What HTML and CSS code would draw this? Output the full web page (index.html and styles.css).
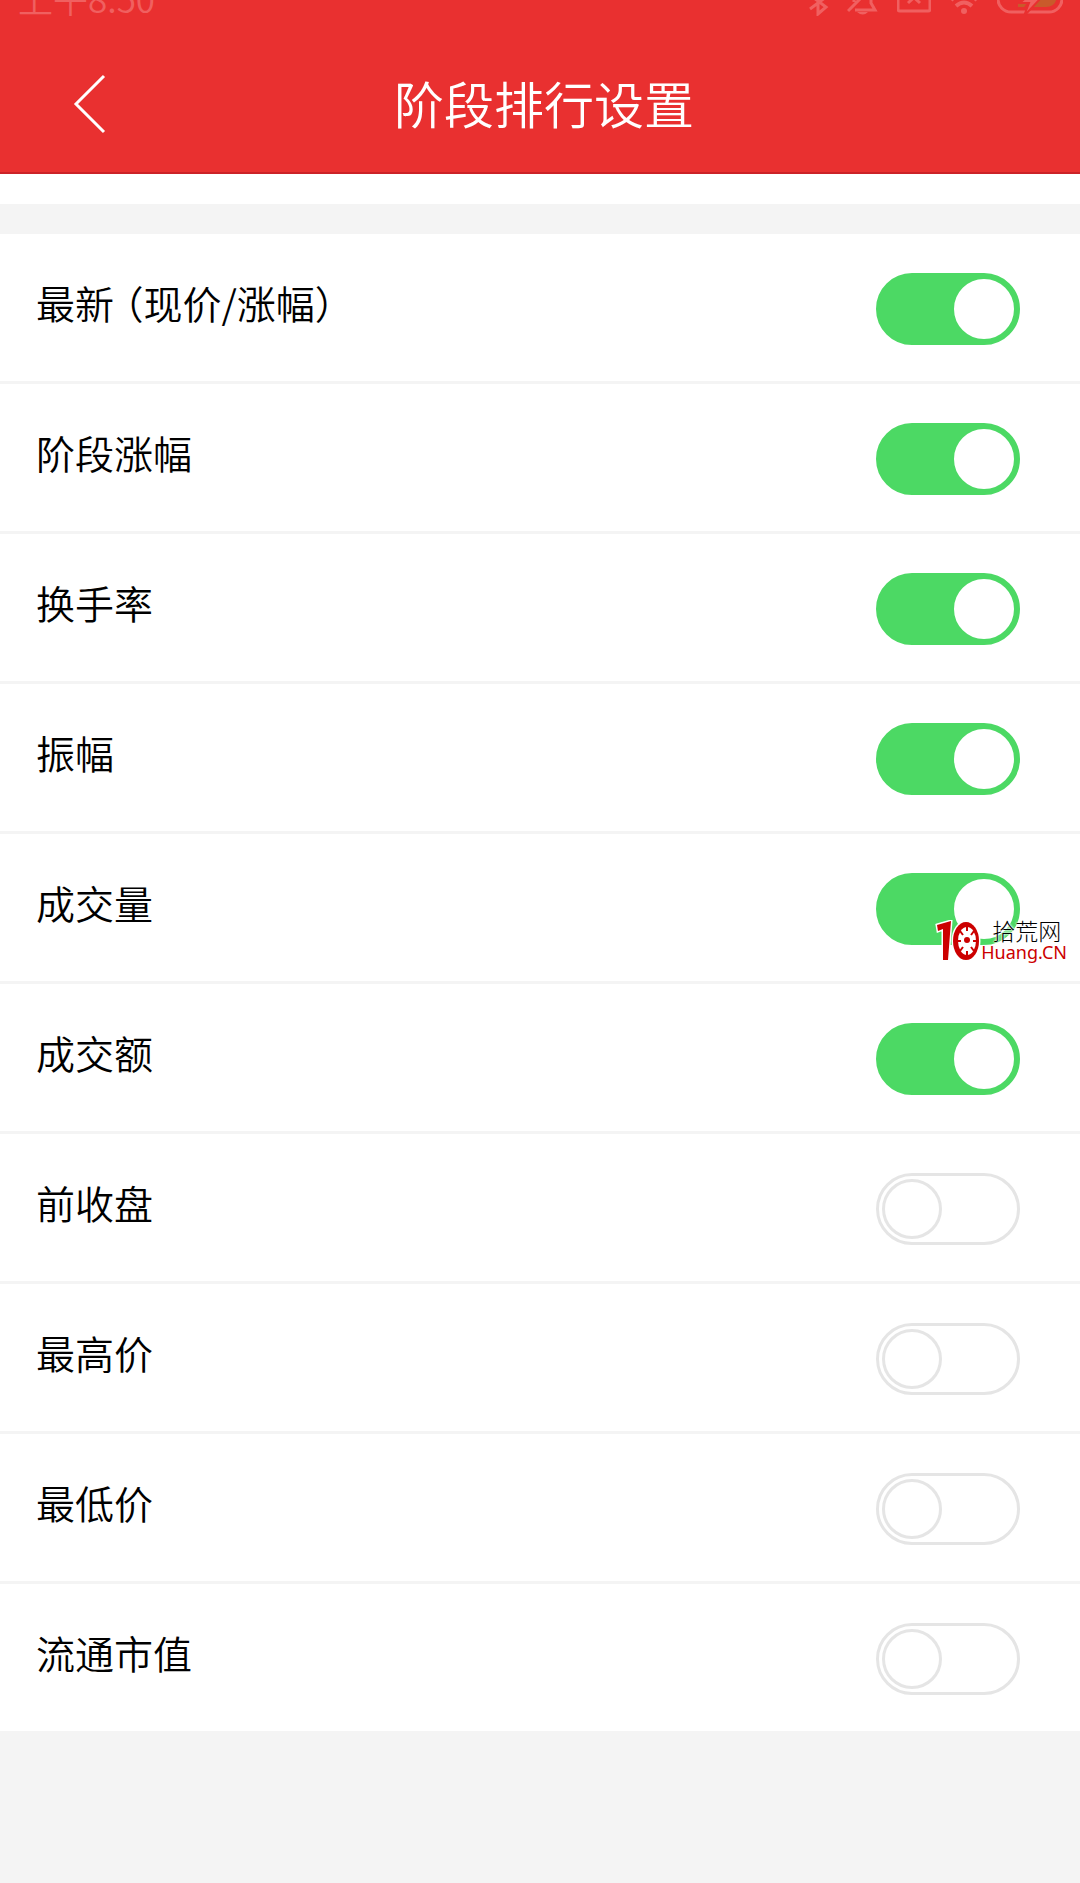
FILE: index.html
```html
<!DOCTYPE html>
<html lang="zh-CN">
<head>
  <meta charset="UTF-8">
  <meta name="viewport" content="width=device-width, initial-scale=1.0">
  <title>阶段排行设置</title>
  <link rel="stylesheet" href="styles.css">
</head>
<body>
  <header class="header">
    <div class="status-bar">
      <span class="status-time">上午8:50</span>
      <div class="status-icons">
        <svg width="22" height="32" viewBox="0 0 22 32"><path d="M3 11l16 12-8 7V6l8 7L3 25" /></svg>
        <svg width="32" height="32" viewBox="0 0 32 32"><path d="M1 27L26 2M8 26h20l-4-7v-9M12 5a8 8 0 0 0-5 7v6" /><path class="fill" d="M10 28h11q-5 5-11 0z" /></svg>
        <svg width="34" height="32" viewBox="0 0 34 32"><rect x="1" y="4" width="32" height="23" rx="2" /><path d="M11 8l12 11M23 8l-12 11" /></svg>
        <svg width="30" height="32" viewBox="0 0 30 32"><path class="wave" d="M2 16a19 19 0 0 1 26 0M7 22q8-7 16 0" /><circle class="fill" cx="15" cy="27" r="3" /></svg>
        <svg width="66" height="32" viewBox="0 0 66 32"><rect x="1" y="2" width="64" height="26" rx="13" /><path class="charge" d="M21 19h9l-3 4h-6zM38 10h22q0 13-11 13H33z" /><path class="bolt" d="M40 3L23 19h9l-5 13 16-17h-8z" /></svg>
      </div>
    </div>
    <div class="nav-bar">
      <button class="back" type="button" aria-label="返回">
        <svg width="34" height="60" viewBox="0 0 34 60"><path d="M32 2L4 30l28 28" /></svg>
      </button>
      <h1 class="title">阶段排行设置</h1>
    </div>
  </header>

  <main class="settings">
    <label class="row"><span class="name">最新<span class="paren">（现价/涨幅）</span></span><input class="switch" type="checkbox" checked></label>
    <label class="row"><span class="name">阶段涨幅</span><input class="switch" type="checkbox" checked></label>
    <label class="row"><span class="name">换手率</span><input class="switch" type="checkbox" checked></label>
    <label class="row"><span class="name">振幅</span><input class="switch" type="checkbox" checked></label>
    <div class="row-wrap">
      <label class="row"><span class="name">成交量</span><input class="switch" type="checkbox" checked></label>
      <div class="watermark">
        <svg width="46" height="42" viewBox="0 0 46 42">
          <path class="one" d="M2 5l14-4-3 39H8V9L3 11z" />
          <ellipse class="ring" cx="31" cy="21" rx="13" ry="19" />
          <ellipse class="face" cx="32" cy="21" rx="9" ry="14" />
          <path class="teeth" d="M32 6v5M32 36v-5M22 21h4M25 11l3 4M25 31l3-4M39 11l-3 4M39 31l-3-4M42 21h-4" />
          <circle class="hub" cx="32" cy="20" r="3" />
        </svg>
        <div class="watermark-text">
          <span class="site">拾荒网</span>
          <span class="domain">Huang.CN</span>
        </div>
      </div>
    </div>
    <label class="row"><span class="name">成交额</span><input class="switch" type="checkbox" checked></label>
    <label class="row"><span class="name">前收盘</span><input class="switch" type="checkbox"></label>
    <label class="row"><span class="name">最高价</span><input class="switch" type="checkbox"></label>
    <label class="row"><span class="name">最低价</span><input class="switch" type="checkbox"></label>
    <label class="row"><span class="name">流通市值</span><input class="switch" type="checkbox"></label>
  </main>
</body>
</html>
```
FILE: styles.css
```css
*,
*::before {
  box-sizing: border-box;
}
body {
  margin: 0;
  font-family: "Noto Sans CJK SC", sans-serif;
  font-weight: 350;
  background: #f4f4f4;
  color: #000;
}
svg {
  display: block;
  fill: none;
}

/* header */
.header {
  background: #e93030;
  border-bottom: 2px solid #cb2328;
  color: #fff;
}
.status-bar {
  height: 16px;
  padding: 0 17px 0 18px;
  display: flex;
  justify-content: space-between;
  align-items: flex-end;
  color: #f06060;
}
.status-time {
  font-size: 35px;
  line-height: 36px;
}
.status-icons {
  display: flex;
  gap: 18px;
}
.status-icons svg {
  stroke: #f06060;
  stroke-width: 3;
}
.status-icons .wave {
  stroke-width: 4;
}
.status-icons .fill {
  fill: #f06060;
  stroke: none;
}
.status-icons .charge {
  fill: #c95a2b;
  stroke: none;
}
.status-icons .bolt {
  fill: #f06060;
  stroke: #e93030;
  stroke-width: 2;
}
.nav-bar {
  height: 156px;
  padding-top: 20px;
  display: grid;
  grid-template-columns: 144px 1fr 136px;
  align-items: center;
}
.back {
  padding: 0 0 0 72px;
  border: none;
  background: none;
  cursor: pointer;
}
.back svg {
  stroke: #fff;
  stroke-width: 3;
}
.title {
  margin: 0;
  padding-bottom: 4px;
  font-size: 50px;
  font-weight: 350;
  line-height: 64px;
  text-align: center;
}

/* settings list */
.settings {
  border-top: 30px solid #fff;
  padding-top: 30px;
}
.row {
  height: 150px;
  padding: 0 60px 0 36px;
  display: flex;
  align-items: center;
  justify-content: space-between;
  background: #fff;
  border-bottom: 3px solid #f4f4f4;
  cursor: pointer;
}
.name {
  font-size: 39px;
  line-height: 48px;
  padding-bottom: 12px;
}
.paren {
  margin-left: 10px;
  font-feature-settings: "halt";
}
.switch {
  appearance: none;
  width: 144px;
  height: 72px;
  margin: 3px 0 0;
  padding: 3px;
  display: flex;
  border: 3px solid #e5e5e5;
  border-radius: 36px;
  background: #fff;
  cursor: pointer;
}
.switch::before {
  content: "";
  width: 60px;
  height: 60px;
  border: 3px solid #e5e5e5;
  border-radius: 50%;
  background: #fff;
}
.switch:checked {
  justify-content: flex-end;
  border-color: #4cd964;
  background: #4cd964;
}
.switch:checked::before {
  border-color: #fff;
}

/* site mark over the switch */
.row-wrap {
  position: relative;
}
.watermark {
  position: absolute;
  right: 13px;
  bottom: 21px;
  display: flex;
  align-items: center;
}
.watermark .one,
.watermark .ring {
  fill: #c00;
  stroke: #fff;
  stroke-width: 3;
  paint-order: stroke;
}
.watermark .face {
  fill: #fff;
}
.watermark .teeth {
  stroke: #c00;
  stroke-width: 2;
}
.watermark .hub {
  fill: #c00;
}
.watermark-text {
  display: flex;
  flex-direction: column;
  text-shadow: 0 0 2px #fff, 0 0 2px #fff, 0 0 3px #fff;
}
.site {
  padding-left: 11px;
  font-size: 23px;
  font-weight: 300;
  line-height: 22px;
}
.domain {
  font-family: "Noto Sans", sans-serif;
  font-size: 18px;
  font-weight: 400;
  line-height: 22px;
  color: #c00;
}
```
